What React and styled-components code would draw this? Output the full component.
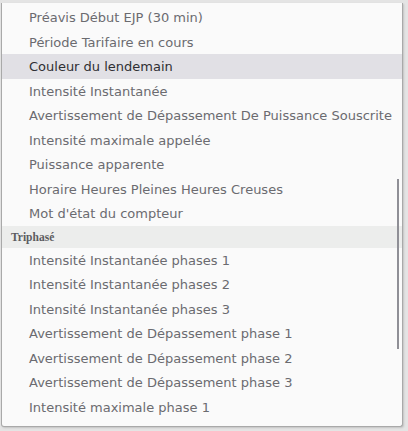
import React from "react";
import styled, { createGlobalStyle } from "styled-components";

const Global = createGlobalStyle`
  html, body { margin: 0; padding: 0; background: #e4e4e4; }
  body { width: 408px; height: 431px; overflow: hidden; }
`;

const Page = styled.div`
  width: 408px;
  height: 431px;
  padding: 3px 5px 0 1px;
  box-sizing: border-box;
`;

const Panel = styled.div`
  position: relative;
  height: 424px;
  background: #fafafa;
  border: 1px solid #a9a9a9;
  border-top: none;
  border-radius: 0 0 3px 3px;
  box-shadow: 1px 1px 2px rgba(0, 0, 0, 0.15);
  overflow: hidden;
  padding-top: 2px;
  box-sizing: border-box;
`;

const List = styled.ul`
  list-style: none;
  margin: 0;
  padding: 0;
`;

const Item = styled.li`
  height: 24.5px;
  line-height: 25px;
  padding-left: 27px;
  white-space: nowrap;
  font-family: "DejaVu Sans", Verdana, sans-serif;
  font-size: 13px;
  color: ${(p) => (p.$active ? "#2f2f33" : "#6b6b70")};
  background: ${(p) => (p.$active ? "#e1e0e5" : "transparent")};
`;

const Group = styled.li`
  height: 22px;
  line-height: 22px;
  padding-left: 9px;
  background: #ecedec;
  font-family: "Liberation Serif", "Times New Roman", serif;
  font-weight: bold;
  font-size: 11.5px;
  color: #5c5c60;
`;

const Thumb = styled.div`
  position: absolute;
  right: 3px;
  top: 176px;
  width: 2px;
  height: 170px;
  background: #8f8f96;
`;

const mono = [
  "Préavis Début EJP (30 min)",
  "Période Tarifaire en cours",
  "Couleur du lendemain",
  "Intensité Instantanée",
  "Avertissement de Dépassement De Puissance Souscrite",
  "Intensité maximale appelée",
  "Puissance apparente",
  "Horaire Heures Pleines Heures Creuses",
  "Mot d'état du compteur",
];

const tri = [
  "Intensité Instantanée phases 1",
  "Intensité Instantanée phases 2",
  "Intensité Instantanée phases 3",
  "Avertissement de Dépassement phase 1",
  "Avertissement de Dépassement phase 2",
  "Avertissement de Dépassement phase 3",
  "Intensité maximale phase 1",
];

export default function App() {
  return (
    <Page>
      <Global />
      <Panel>
        <List>
          {mono.map((t) => (
            <Item key={t} $active={t === "Couleur du lendemain"}>
              {t}
            </Item>
          ))}
          <Group>Triphasé</Group>
          {tri.map((t) => (
            <Item key={t}>{t}</Item>
          ))}
        </List>
        <Thumb />
      </Panel>
    </Page>
  );
}
